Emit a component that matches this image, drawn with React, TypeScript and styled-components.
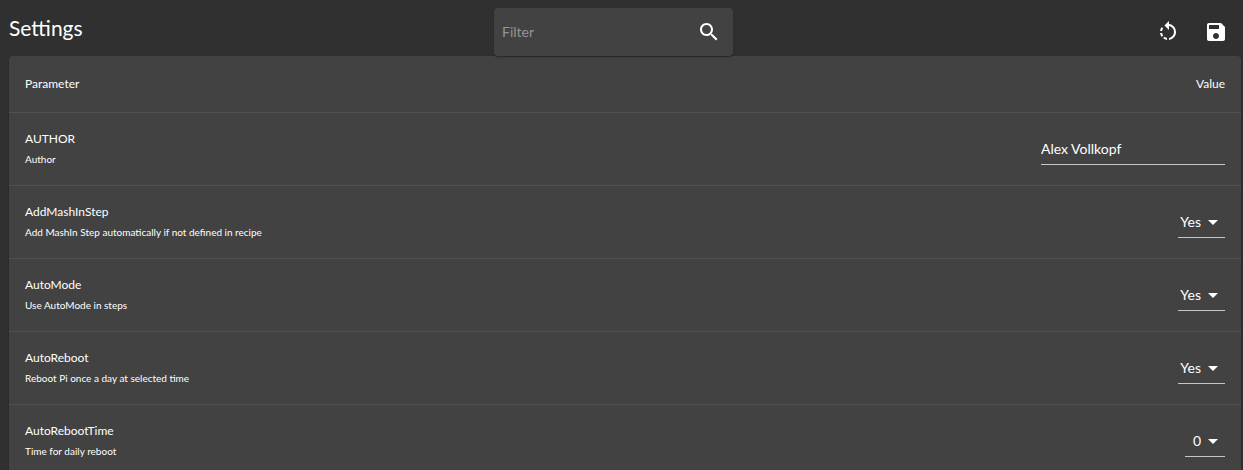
import React, { useState } from 'react';
import styled, { createGlobalStyle } from 'styled-components';

const GlobalStyle = createGlobalStyle`
  *, *::before, *::after { box-sizing: border-box; }
  body {
    margin: 0;
    background: #303030;
    color: #fff;
    font-family: Lato, 'Liberation Sans', sans-serif;
    font-size: 12px;
    scrollbar-width: none;
  }
`;

const elevation = `
  0 2px 1px -1px rgba(0, 0, 0, 0.2),
  0 1px 1px 0 rgba(0, 0, 0, 0.14),
  0 1px 3px 0 rgba(0, 0, 0, 0.12)`;

const Page = styled.main`
  padding: 0 2px 0 9px;
`;

const Header = styled.header`
  position: relative;
  display: flex;
  justify-content: space-between;
  align-items: flex-start;
  height: 56px;
  padding-right: 1px;
`;

const Title = styled.h1`
  width: 74px;
  margin: 0;
  padding-top: 12px;
  font-size: 21px;
  font-weight: 400;
  line-height: 32px;
  white-space: nowrap;
`;

const SearchBox = styled.form`
  display: flex;
  align-items: center;
  width: 239px;
  height: 48px;
  margin-top: 8px;
  padding-left: 8px;
  border-radius: 4px;
  background: #424242;
  box-shadow: ${elevation};
`;

const SearchInput = styled.input`
  flex: 1;
  min-width: 0;
  height: 48px;
  padding: 0 0 2px;
  border: 0;
  outline: 0;
  background: transparent;
  color: #fff;
  font: inherit;
  font-size: 14px;

  &::placeholder {
    color: #959595;
    opacity: 1;
  }
`;

const IconButton = styled.button`
  display: flex;
  width: 48px;
  height: 48px;
  padding: 12px;
  border: 0;
  background: transparent;
  color: #fff;
  cursor: pointer;
`;

const Icon = styled.svg`
  width: 24px;
  height: 24px;
  fill: currentColor;
`;

const Actions = styled.div`
  display: flex;
  padding-top: 8px;
`;

const Table = styled.table`
  width: 100%;
  border-spacing: 0;
  border-radius: 4px;
  background: #424242;
  box-shadow: ${elevation};
`;

const HeadCell = styled.th<{ $end?: boolean }>`
  padding: 16px;
  border-bottom: 1px solid #515151;
  font-weight: 400;
  line-height: 24px;
  text-align: ${(p) => (p.$end ? 'right' : 'left')};
`;

const Cell = styled.td<{ $end?: boolean }>`
  height: 73px;
  padding: 16px;
  border-bottom: 1px solid #515151;
  line-height: 20px;
  text-align: ${(p) => (p.$end ? 'right' : 'left')};
`;

const Name = styled.label`
  display: block;
`;

const Description = styled.div`
  font-size: 10px;
`;

const TextField = styled.input`
  display: block;
  width: 184px;
  height: 32px;
  margin-left: auto;
  padding: 0;
  border: 0;
  border-bottom: 1px solid #c6c6c6;
  border-radius: 0;
  outline: 0;
  background: transparent;
  color: #fff;
  font: inherit;
  font-size: 14px;
`;

const SelectWrap = styled.div<{ $compact?: boolean }>`
  display: grid;
  align-items: center;
  justify-items: end;
  width: ${(p) => (p.$compact ? 40 : 47)}px;
  height: 32px;
  margin-left: auto;
  border-bottom: 1px solid #c6c6c6;

  > * {
    grid-area: 1 / 1;
  }

  svg {
    pointer-events: none;
  }
`;

const Select = styled.select`
  appearance: none;
  width: 100%;
  height: 31px;
  padding: 0 24px 0 0;
  border: 0;
  outline: 0;
  background: transparent;
  color: #fff;
  font: inherit;
  font-size: 14px;
  text-align: right;
  text-align-last: right;

  option {
    background: #424242;
  }
`;

type Setting = { name: string; description: string; value: string; options?: string[] };

const yesNo = ['Yes', 'No'];
const hours = Array.from({ length: 24 }, (_, i) => String(i));

const initialSettings: Setting[] = [
  { name: 'AUTHOR', description: 'Author', value: 'Alex Vollkopf' },
  {
    name: 'AddMashInStep',
    description: 'Add MashIn Step automatically if not defined in recipe',
    value: 'Yes',
    options: yesNo,
  },
  { name: 'AutoMode', description: 'Use AutoMode in steps', value: 'Yes', options: yesNo },
  { name: 'AutoReboot', description: 'Reboot Pi once a day at selected time', value: 'Yes', options: yesNo },
  { name: 'AutoRebootTime', description: 'Time for daily reboot', value: '0', options: hours },
];

export default function App() {
  const [filter, setFilter] = useState('');
  const [settings, setSettings] = useState(initialSettings);

  const update = (name: string, value: string) =>
    setSettings((all) => all.map((s) => (s.name === name ? { ...s, value } : s)));

  const visible = settings.filter((s) => s.name.toLowerCase().includes(filter.toLowerCase()));

  return (
    <>
      <GlobalStyle />
      <Page>
        <Header>
          <Title>Settings</Title>
          <SearchBox role="search" onSubmit={(e) => e.preventDefault()}>
            <SearchInput
              aria-label="Filter"
              placeholder="Filter"
              value={filter}
              onChange={(e) => setFilter(e.target.value)}
            />
            <IconButton type="submit" aria-label="Search">
              <Icon viewBox="0 0 24 24">
                <path d="M15.5 14h-.79l-.28-.27C15.41 12.59 16 11.11 16 9.5 16 5.91 13.09 3 9.5 3S3 5.91 3 9.5 5.91 16 9.5 16c1.61 0 3.09-.59 4.23-1.57l.27.28v.79l5 4.99L20.49 19l-4.99-5zm-6 0C7.01 14 5 11.99 5 9.5S7.01 5 9.5 5 14 7.01 14 9.5 11.99 14 9.5 14z" />
              </Icon>
            </IconButton>
          </SearchBox>
          <Actions>
            <IconButton type="button" aria-label="Reset" onClick={() => setSettings(initialSettings)}>
              <Icon viewBox="0 0 24 24">
                <path d="M7.11 8.53L5.7 7.11C4.8 8.27 4.24 9.61 4.07 11h2.02c.14-.87.49-1.72 1.02-2.47zM6.09 13H4.07c.17 1.39.72 2.73 1.62 3.89l1.41-1.42c-.52-.75-.87-1.59-1.01-2.47zm1.01 5.32c1.16.9 2.51 1.44 3.9 1.61V17.9c-.87-.15-1.71-.49-2.46-1.03L7.1 18.32zM13 4.07V1L8.45 5.55 13 10V6.09c2.84.48 5 2.94 5 5.91s-2.16 5.43-5 5.91v2.02c3.95-.49 7-3.85 7-7.93s-3.05-7.44-7-7.93z" />
              </Icon>
            </IconButton>
            <IconButton type="button" aria-label="Save">
              <Icon viewBox="0 0 24 24">
                <path d="M17 3H5c-1.11 0-2 .9-2 2v14c0 1.1.89 2 2 2h14c1.1 0 2-.9 2-2V7l-4-4zm-5 16c-1.66 0-3-1.34-3-3s1.34-3 3-3 3 1.34 3 3-1.34 3-3 3zm3-10H5V5h10v4z" />
              </Icon>
            </IconButton>
          </Actions>
        </Header>
        <Table>
          <thead>
            <tr>
              <HeadCell scope="col">Parameter</HeadCell>
              <HeadCell scope="col" $end>
                Value
              </HeadCell>
            </tr>
          </thead>
          <tbody>
            {visible.map((s) => (
              <tr key={s.name}>
                <Cell>
                  <Name htmlFor={s.name}>{s.name}</Name>
                  <Description>{s.description}</Description>
                </Cell>
                <Cell $end>
                  {s.options ? (
                    <SelectWrap $compact={s.options === hours}>
                      <Select id={s.name} value={s.value} onChange={(e) => update(s.name, e.target.value)}>
                        {s.options.map((o) => (
                          <option key={o}>{o}</option>
                        ))}
                      </Select>
                      <Icon viewBox="0 0 24 24" aria-hidden="true">
                        <path d="M7 10l5 5 5-5z" />
                      </Icon>
                    </SelectWrap>
                  ) : (
                    <TextField id={s.name} value={s.value} onChange={(e) => update(s.name, e.target.value)} />
                  )}
                </Cell>
              </tr>
            ))}
          </tbody>
        </Table>
      </Page>
    </>
  );
}
